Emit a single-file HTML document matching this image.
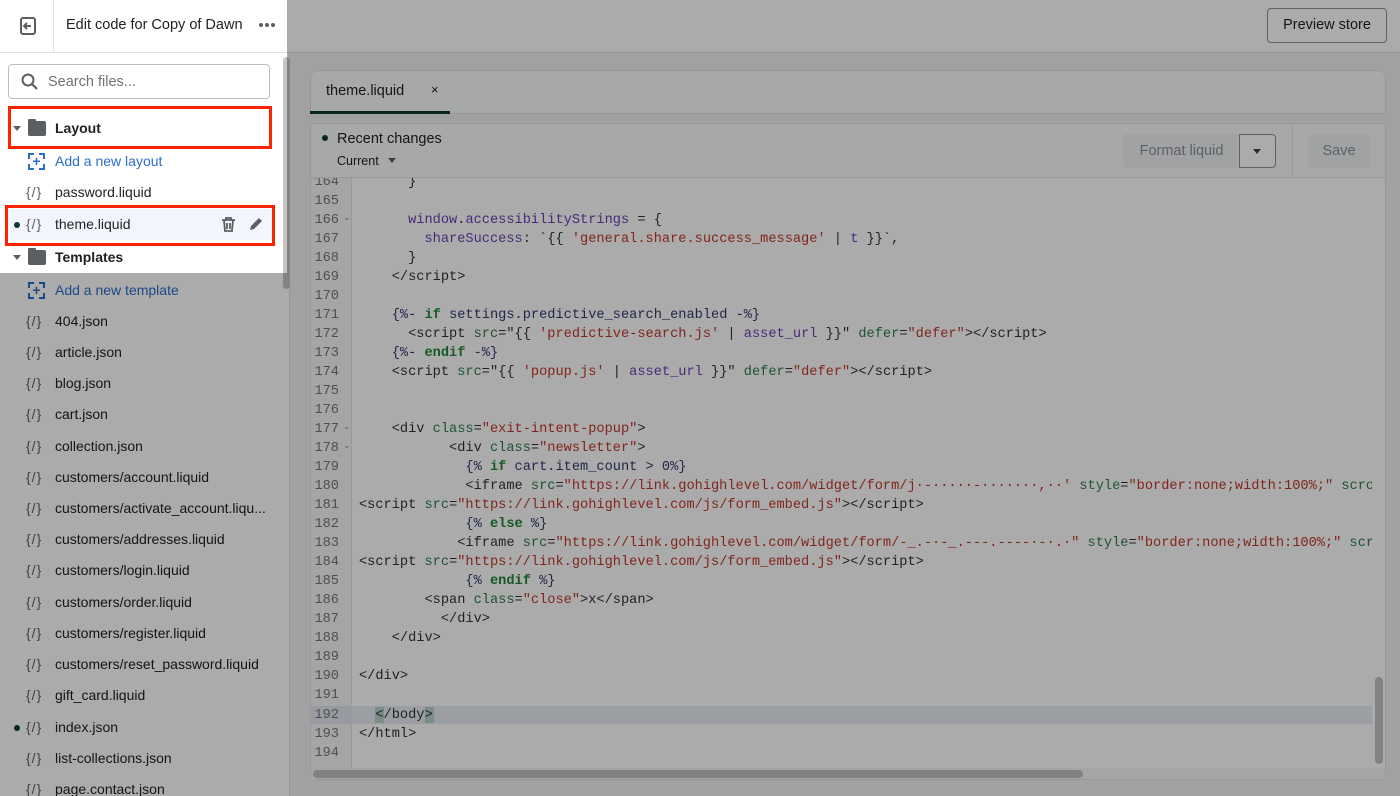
<!DOCTYPE html>
<html><head><meta charset="utf-8"><style>
*{box-sizing:border-box;margin:0;padding:0}
html,body{width:1400px;height:796px;overflow:hidden}
body{position:relative;background:#f1f1f1;font-family:"Liberation Sans",sans-serif;color:#202223}
.abs{position:absolute}
#hdr{left:0;top:0;width:1400px;height:53px;background:#fff;border-bottom:1px solid #e1e3e5}
.item{position:absolute;left:0;width:280px;height:31px;font-size:14px;line-height:31px}
.item .ic{position:absolute;left:26px;top:0;font-size:14px;color:#5c5f62;letter-spacing:1px}
.item .t{position:absolute;left:55px;top:0;white-space:nowrap}
.dot{position:absolute;left:14px;top:13px;width:6px;height:6px;border-radius:50%;background:#0b3d2e}
.folder{position:absolute;left:28px;top:8px;width:18px;height:15px;background:#5c5f62;border-radius:2px}
.folder:before{content:"";position:absolute;left:0;top:-2px;width:8px;height:4px;background:#5c5f62;border-radius:1px 1px 0 0}
.tri{position:absolute;left:13px;top:13px;border-left:4px solid transparent;border-right:4px solid transparent;border-top:5px solid #5c5f62}
.add{position:absolute;left:28px;top:7px;width:17px;height:17px;border:2px dashed #2c6ecb;color:#2c6ecb;font-size:14px;line-height:12px;text-align:center;font-weight:bold}
.code{font-family:"Liberation Mono",monospace;font-size:13.65px;white-space:pre;color:#333}
.ln{position:absolute;left:0;width:28px;text-align:right;font-family:"Liberation Mono",monospace;font-size:13.65px;color:#777}
.cl{position:absolute;left:7px}
.k{color:#22863a;font-weight:bold}.s{color:#c0392b}.a{color:#2e7d4f}.p{color:#6a3fb5}.d{color:#333a6e}
.red{position:absolute;border:3px solid #ff2200}
</style></head><body>
<div id="hdr" class="abs"></div>
<div class="abs" style="left:0;top:0;width:54px;height:53px;border-right:1px solid #e1e3e5"></div>
<svg class="abs" style="left:17px;top:15px" width="22" height="22" viewBox="0 0 22 22"><rect x="4" y="3" width="14" height="16" rx="2" fill="none" stroke="#5c5f62" stroke-width="2"/><path d="M14 11H7M10 8l-3 3 3 3" fill="none" stroke="#5c5f62" stroke-width="2"/></svg>
<div class="abs" style="left:66px;top:17px;font-size:14.5px">Edit code for Copy of Dawn</div>
<div class="abs" style="left:259px;top:23px;width:4px;height:4px;border-radius:50%;background:#5c5f62;box-shadow:6px 0 0 #5c5f62,12px 0 0 #5c5f62"></div>
<div class="abs" style="left:1267px;top:8px;width:120px;height:35px;border:1px solid #8c9196;border-radius:4px;background:#fff;font-size:14.5px;text-align:center;line-height:33px">Preview store</div>

<div class="abs" style="left:0;top:53px;width:290px;height:743px;background:#fff;border-right:1px solid #e1e3e5"></div>
<div class="abs" style="left:283px;top:57px;width:7px;height:232px;background:#c4c4c4;border-radius:4px"></div>
<div class="abs" style="left:8px;top:64px;width:262px;height:35px;border:1px solid #babfc3;border-radius:4px"></div>
<svg class="abs" style="left:20px;top:72px" width="20" height="20" viewBox="0 0 20 20"><circle cx="8" cy="8" r="5.5" fill="none" stroke="#5c5f62" stroke-width="2"/><path d="M12 12l5 5" stroke="#5c5f62" stroke-width="2.2"/></svg>
<div class="abs" style="left:48px;top:74px;font-size:14.5px;color:#6d7175">Search files...</div>

<div class="item" style="top:113px"><span class="tri"></span><span class="folder"></span><span class="t" style="font-weight:bold">Layout</span></div>
<div class="item" style="top:146px"><span class="add">+</span><span class="t" style="color:#2c6ecb">Add a new layout</span></div>
<div class="item" style="top:177px"><span class="ic">{/}</span><span class="t">password.liquid</span></div>
<div class="item" style="top:209px;left:10px;width:262px;background:#f2f5fb"></div>
<div class="item" style="top:209px"><span class="dot"></span><span class="ic">{/}</span><span class="t">theme.liquid</span>
<svg style="position:absolute;left:220px;top:7px" width="17" height="17" viewBox="0 0 17 17"><path d="M2 4h13M6 4V2h5v2M4 4l1 11h7l1-11M7 7v6M10 7v6" fill="none" stroke="#5c5f62" stroke-width="1.8"/></svg>
<svg style="position:absolute;left:247px;top:6px" width="18" height="18" viewBox="0 0 18 18"><path d="M3 15l1-4 8-8 3 3-8 8z" fill="#5c5f62"/></svg></div>
<div class="item" style="top:242px"><span class="tri"></span><span class="folder"></span><span class="t" style="font-weight:bold">Templates</span></div>
<div class="item" style="top:275px"><span class="add">+</span><span class="t" style="color:#2c6ecb">Add a new template</span></div>
<div class="item" style="top:306px"><span class="ic">{/}</span><span class="t">404.json</span></div>
<div class="item" style="top:337px"><span class="ic">{/}</span><span class="t">article.json</span></div>
<div class="item" style="top:368px"><span class="ic">{/}</span><span class="t">blog.json</span></div>
<div class="item" style="top:399px"><span class="ic">{/}</span><span class="t">cart.json</span></div>
<div class="item" style="top:431px"><span class="ic">{/}</span><span class="t">collection.json</span></div>
<div class="item" style="top:462px"><span class="ic">{/}</span><span class="t">customers/account.liquid</span></div>
<div class="item" style="top:493px"><span class="ic">{/}</span><span class="t">customers/activate_account.liqu...</span></div>
<div class="item" style="top:524px"><span class="ic">{/}</span><span class="t">customers/addresses.liquid</span></div>
<div class="item" style="top:555px"><span class="ic">{/}</span><span class="t">customers/login.liquid</span></div>
<div class="item" style="top:587px"><span class="ic">{/}</span><span class="t">customers/order.liquid</span></div>
<div class="item" style="top:618px"><span class="ic">{/}</span><span class="t">customers/register.liquid</span></div>
<div class="item" style="top:649px"><span class="ic">{/}</span><span class="t">customers/reset_password.liquid</span></div>
<div class="item" style="top:680px"><span class="ic">{/}</span><span class="t">gift_card.liquid</span></div>
<div class="item" style="top:712px"><span class="dot"></span><span class="ic">{/}</span><span class="t">index.json</span></div>
<div class="item" style="top:743px"><span class="ic">{/}</span><span class="t">list-collections.json</span></div>
<div class="item" style="top:774px"><span class="ic">{/}</span><span class="t">page.contact.json</span></div>

<div class="abs" style="left:310px;top:70px;width:1076px;height:44px;background:#fafbfb;border:1px solid #e1e3e5;border-radius:8px 8px 0 0"></div>
<div class="abs" style="left:326px;top:83px;font-size:14.5px">theme.liquid</div>
<div class="abs" style="left:431px;top:82px;font-size:13px">×</div>
<div class="abs" style="left:310px;top:111px;width:140px;height:3px;background:#0b3d2e"></div>
<div class="abs" style="left:310px;top:123px;width:1076px;height:657px;background:#fff;border:1px solid #e1e3e5;border-radius:0 0 8px 8px"></div>
<div class="abs" style="left:311px;top:124px;width:1074px;height:54px;background:#fafbfb;border-bottom:1px solid #e1e3e5"></div>
<div class="abs" style="left:322px;top:135px;width:6px;height:6px;border-radius:50%;background:#0b3d2e"></div>
<div class="abs" style="left:337px;top:131px;font-size:14.5px">Recent changes</div>
<div class="abs" style="left:337px;top:154px;font-size:12.5px">Current</div>
<div class="abs" style="left:388px;top:158px;border-left:4px solid transparent;border-right:4px solid transparent;border-top:5px solid #5c5f62"></div>
<div class="abs" style="left:1292px;top:124px;width:1px;height:54px;background:#e1e3e5"></div>
<div class="abs" style="left:1123px;top:134px;width:117px;height:34px;background:#f1f2f3;border-radius:4px 0 0 4px;font-size:14.5px;color:#8c9196;text-align:center;line-height:34px">Format liquid</div>
<div class="abs" style="left:1239px;top:134px;width:37px;height:34px;border:1px solid #8c9196;border-radius:0 4px 4px 0;background:#fff"></div>
<div class="abs" style="left:1253px;top:149px;border-left:4px solid transparent;border-right:4px solid transparent;border-top:5px solid #444"></div>
<div class="abs" style="left:1308px;top:134px;width:62px;height:34px;background:#f1f2f3;border-radius:4px;font-size:14.5px;color:#8c9196;text-align:center;line-height:34px">Save</div>

<div class="abs" style="left:311px;top:178px;width:41px;height:590px;background:#f7f7f7;border-right:1px solid #e1e3e5"></div>
<div class="abs" style="left:352px;top:706px;width:1020px;height:18px;background:#e8eef4"></div>
<div class="abs" style="left:311px;top:706px;width:41px;height:18px;background:#e1e8f0"></div>
<div class="abs" style="left:375px;top:707px;width:9px;height:16px;background:#b7d4c9"></div>
<div class="abs" style="left:425px;top:707px;width:9px;height:16px;background:#b7d4c9"></div>

<div class="abs code" style="left:311px;top:178px;width:41px;height:590px;overflow:hidden">
<div style="position:absolute;left:0;top:-176px;width:41px;height:800px">
<div class="ln" style="top:173px">164</div><div class="ln" style="top:192px">165</div><div class="ln" style="top:211px">166</div><div class="ln" style="top:230px">167</div><div class="ln" style="top:249px">168</div><div class="ln" style="top:268px">169</div><div class="ln" style="top:287px">170</div><div class="ln" style="top:306px">171</div><div class="ln" style="top:325px">172</div><div class="ln" style="top:344px">173</div><div class="ln" style="top:363px">174</div><div class="ln" style="top:382px">175</div><div class="ln" style="top:401px">176</div><div class="ln" style="top:420px">177</div><div class="ln" style="top:439px">178</div><div class="ln" style="top:458px">179</div><div class="ln" style="top:477px">180</div><div class="ln" style="top:496px">181</div><div class="ln" style="top:515px">182</div><div class="ln" style="top:534px">183</div><div class="ln" style="top:553px">184</div><div class="ln" style="top:572px">185</div><div class="ln" style="top:591px">186</div><div class="ln" style="top:610px">187</div><div class="ln" style="top:629px">188</div><div class="ln" style="top:648px">189</div><div class="ln" style="top:667px">190</div><div class="ln" style="top:686px">191</div><div class="ln" style="top:706px">192</div><div class="ln" style="top:725px">193</div><div class="ln" style="top:744px">194</div>
</div></div>

<div class="abs" style="left:352px;top:178px;width:1020px;height:590px;overflow:hidden">
<div class="code" style="position:absolute;left:0;top:-176px;width:1400px;height:800px">
<div class="cl" style="top:173px">      }</div>
<div class="cl" style="top:211px">      <span class="p">window</span>.<span class="p">accessibilityStrings</span> = {</div>
<div class="cl" style="top:230px">        <span class="p">shareSuccess</span>: `{{ <span class="s">'general.share.success_message'</span> | <span class="p">t</span> }}`,</div>
<div class="cl" style="top:249px">      }</div>
<div class="cl" style="top:268px">    &lt;/script&gt;</div>
<div class="cl" style="top:306px">    <span class="d">{%-</span> <span class="k">if</span> <span class="d">settings.predictive_search_enabled -%}</span></div>
<div class="cl" style="top:325px">      &lt;script <span class="a">src</span>="{{ <span class="s">'predictive-search.js'</span> | <span class="p">asset_url</span> }}" <span class="a">defer</span>=<span class="s">"defer"</span>&gt;&lt;/script&gt;</div>
<div class="cl" style="top:344px">    <span class="d">{%-</span> <span class="k">endif</span> <span class="d">-%}</span></div>
<div class="cl" style="top:363px">    &lt;script <span class="a">src</span>="{{ <span class="s">'popup.js'</span> | <span class="p">asset_url</span> }}" <span class="a">defer</span>=<span class="s">"defer"</span>&gt;&lt;/script&gt;</div>
<div class="cl" style="top:420px">    &lt;div <span class="a">class</span>=<span class="s">"exit-intent-popup"</span>&gt;</div>
<div class="cl" style="top:439px">           &lt;div <span class="a">class</span>=<span class="s">"newsletter"</span>&gt;</div>
<div class="cl" style="top:458px">             <span class="d">{%</span> <span class="k">if</span> <span class="d">cart.item_count &gt; 0%}</span></div>
<div class="cl" style="top:477px">             &lt;iframe <span class="a">src</span>=<span class="s">"https://link.gohighlevel.com/widget/form/j·-·····-·······,··'</span> <span class="a">style</span>=<span class="s">"border:none;width:100%;"</span> <span class="a">scrolling</span></div>
<div class="cl" style="top:496px">&lt;script <span class="a">src</span>=<span class="s">"https://link.gohighlevel.com/js/form_embed.js"</span>&gt;&lt;/script&gt;</div>
<div class="cl" style="top:515px">             <span class="d">{%</span> <span class="k">else</span> <span class="d">%}</span></div>
<div class="cl" style="top:534px">            &lt;iframe <span class="a">src</span>=<span class="s">"https://link.gohighlevel.com/widget/form/-_.-·-_.---.----·-·.·"</span> <span class="a">style</span>=<span class="s">"border:none;width:100%;"</span> <span class="a">scrolling</span></div>
<div class="cl" style="top:553px">&lt;script <span class="a">src</span>=<span class="s">"https://link.gohighlevel.com/js/form_embed.js"</span>&gt;&lt;/script&gt;</div>
<div class="cl" style="top:572px">             <span class="d">{%</span> <span class="k">endif</span> <span class="d">%}</span></div>
<div class="cl" style="top:591px">        &lt;span <span class="a">class</span>=<span class="s">"close"</span>&gt;x&lt;/span&gt;</div>
<div class="cl" style="top:610px">          &lt;/div&gt;</div>
<div class="cl" style="top:629px">    &lt;/div&gt;</div>
<div class="cl" style="top:667px">&lt;/div&gt;</div>
<div class="cl" style="top:706px">  &lt;/body&gt;</div>
<div class="cl" style="top:725px">&lt;/html&gt;</div>
</div></div>
<div class="abs" style="left:343px;top:212px;font-size:9px;color:#888">⌄</div>
<div class="abs" style="left:343px;top:421px;font-size:9px;color:#888">⌄</div>
<div class="abs" style="left:343px;top:440px;font-size:9px;color:#888">⌄</div>
<div class="abs" style="left:311px;top:768px;width:1074px;height:11px;background:#f7f7f7"></div>
<div class="abs" style="left:313px;top:770px;width:770px;height:8px;background:#c2c2c2;border-radius:4px"></div>
<div class="abs" style="left:1375px;top:677px;width:8px;height:87px;background:#c2c2c2;border-radius:4px"></div>

<div class="red" style="left:8px;top:106px;width:264px;height:43px"></div>
<div class="red" style="left:5px;top:205px;width:270px;height:41px"></div>

<div class="abs" style="left:0;top:0;width:287px;height:273px;box-shadow:0 0 0 3000px rgba(0,0,0,0.33);pointer-events:none"></div>
</body></html>
